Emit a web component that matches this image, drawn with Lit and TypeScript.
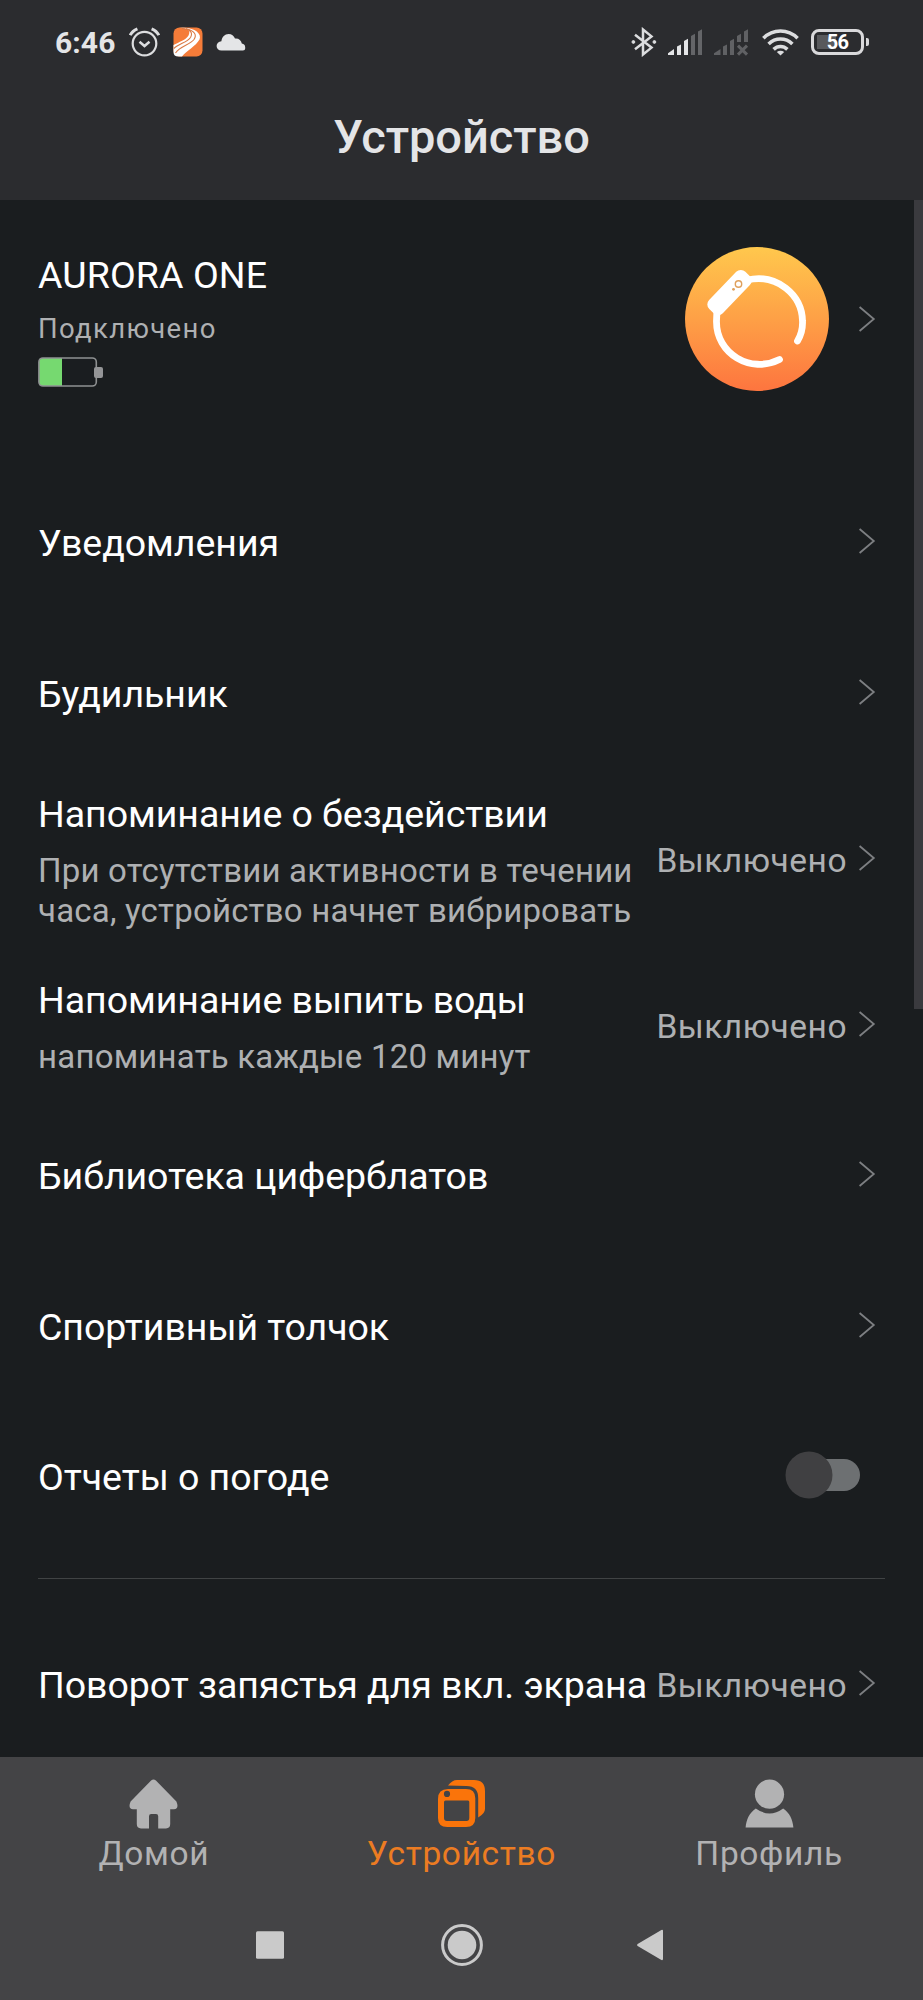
import { LitElement, html, css, svg, nothing } from "lit";
import { customElement, property } from "lit/decorators.js";
import { classMap } from "lit/directives/class-map.js";

@customElement("row-chevron")
class RowChevron extends LitElement {
  static styles = css`
    :host { display: block; width: 18px; height: 28px; flex: none; }
    svg { display: block; }
  `;
  render() {
    return html`<svg width="18" height="28" viewBox="0 0 18 28" fill="none" stroke="#7d7f82" stroke-width="1.8">
      <path d="M1.6 2 L15.8 14 L1.6 26" />
    </svg>`;
  }
}

@customElement("status-bar")
class StatusBar extends LitElement {
  static styles = css`
    :host { display: flex; align-items: center; height: 84px; color: #e4e5e7; box-sizing: border-box; padding: 0 54px 0 55px; }
    svg { display: block; flex: none; }
    .time { font-size: 30px; font-weight: 700; line-height: 36px; letter-spacing: 0.1px; width: 61px; padding-top: 2px; white-space: nowrap; }
    .left { display: flex; align-items: center; gap: 13px; }
    .right { display: flex; align-items: center; margin-left: auto; }
    .bt { margin-right: 11px; }
    .sig { margin-right: 11px; }
    .sig2 { margin-right: 13px; }
    .wifi { margin-right: 12px; }
    .battery { display: flex; align-items: center; }
    .cell { width: 53px; height: 26px; box-sizing: border-box; border: 3.5px solid #d9d9db; border-radius: 8px; padding: 2.5px; display: flex; align-items: center; justify-content: center;
      background: linear-gradient(#58595c, #58595c) 3px 50% / 19px 14px no-repeat; font-size: 20px; font-weight: 700; line-height: 20px; color: #fff; letter-spacing: -0.6px; }
    .nub { width: 3px; height: 8px; margin-left: 2px; background: #d9d9db; border-radius: 0 2px 2px 0; }
  `;
  render() {
    return html`
      <div class="left">
        <div class="time">6:46</div>
        <svg width="31" height="30" viewBox="0 0 31 30" fill="none" stroke="#dcdddf" stroke-width="2.2">
          <circle cx="15.5" cy="16.6" r="11.8" />
          <path d="M10.5 14.8 L15.5 19 L20.5 14.8" stroke-width="2.5" />
          <path d="M1.2 8.2 C2.6 5.2 5 3.2 8.4 1.8 M29.8 8.2 C28.4 5.2 26 3.2 22.6 1.8" stroke-width="3" />
        </svg>
        <svg width="30" height="30" viewBox="0 0 30 30">
          <rect x="0.5" y="0.5" width="29" height="29" rx="6" fill="#f57c39" />
          <path d="M6 0.8 C15 0.8 18 4 15.5 8.5 C13 13 6 15 0.5 18 V25 Q0.5 29.5 5.5 29.5 H9 C13 24 23 19 26.5 12.5 C29 7 22 1 11 0.8Z" fill="#fff" />
          <path d="M9 1.5 C18 2.5 20 6 17.5 10.5 C14 15.5 6 16.5 0.8 21.5 M13 1.5 C22 4 24 8 21 12.5 C17 18 7 19 2.5 26" fill="none" stroke="#d97a45" stroke-width="1.1" />
        </svg>
        <svg width="30" height="18" viewBox="0 0 30 18">
          <path d="M5.5 17.5 C2.5 17.5 0.6 15.6 0.6 13 C0.6 10.4 2.6 8.4 5.4 8.2 C6 4 8.8 1 12.6 1 C15.6 1 18 2.8 19 5.6 C22.8 5.2 25.2 7.4 25.8 10.6 C28 11 29.2 12.4 29.2 14.2 V15.6 Q29.2 17.5 27 17.5Z" fill="#e4e5e7" />
        </svg>
      </div>
      <div class="right">
        <svg class="bt" width="26" height="30" viewBox="0 0 26 30" fill="none" stroke="#dcdddf" stroke-width="2.5">
          <path d="M4 7.8 L20.5 20.6 L12 27.5 V2.5 L20.5 9.4 L4 22.2" />
          <circle cx="2.4" cy="15" r="1.4" fill="#dcdddf" stroke-width="1" />
          <circle cx="23.4" cy="15" r="1.4" fill="#dcdddf" stroke-width="1" />
        </svg>
        <svg class="sig" width="35" height="27" viewBox="0 0 35 27">
          <g fill="#e4e5e7">
            <path d="M0 26 V24.2 L6 20 V26Z" /><path d="M9 26 V17.6 L13 15.4 V26Z" /><path d="M16 26 V12 L20 9.8 V26Z" />
          </g>
          <g fill="#646568"><path d="M23 26 V7 L27 4.8 V26Z" /><path d="M30 26 V2.4 L34 0.2 V26Z" /></g>
        </svg>
        <svg class="sig2" width="35" height="27" viewBox="0 0 35 27" fill="#606164">
          <path d="M0 26 V24.2 L6.5 20 V26Z" /><path d="M9 26 V17.6 L13 15.4 V26Z" /><path d="M16 26 V12 L20 9.8 V26Z" />
          <path d="M23 13 V7 L27 4.8 V13Z" /><path d="M30 13 V2.4 L34 0.2 V13Z" />
          <path d="M24 16.6 L33 25.6 M33 16.6 L24 25.6" stroke="#606164" stroke-width="3" />
        </svg>
        <svg class="wifi" width="37" height="27" viewBox="0 0 37 27" fill="none" stroke="#dcdddf" stroke-width="3.6">
          <path d="M1.4 9.2 C11 -0.4 26 -0.4 35.6 9.2" />
          <path d="M6.6 15 C13.5 8.4 23.5 8.4 30.4 15" />
          <path d="M11.6 20.4 C15.6 16.6 21.4 16.6 25.4 20.4" />
          <path d="M14.8 23 C17 21.2 20 21.2 22.2 23 L18.5 26.6Z" fill="#dcdddf" stroke="none" />
        </svg>
        <div class="battery"><div class="cell">56</div><div class="nub"></div></div>
      </div>
    `;
  }
}

@customElement("device-card")
class DeviceCard extends LitElement {
  static styles = css`
    :host { display: flex; height: 266px; box-sizing: border-box; padding: 47px 47px 0 38px; }
    .info { flex: 1; padding-top: 6px; }
    .name { font-size: 37.5px; line-height: 44px; color: #fff; letter-spacing: 0.1px; }
    .state { font-size: 27.5px; line-height: 34px; color: #aeb0b2; letter-spacing: 1.35px; margin-top: 15px; }
    .charge { display: block; margin-top: 11px; }
    .aside { display: flex; align-items: center; gap: 29px; height: 144px; }
    .disc { display: block; }
  `;
  render() {
    return html`
      <div class="info">
        <div class="name">AURORA ONE</div>
        <div class="state">Подключено</div>
        <svg class="charge" width="66" height="30" viewBox="0 0 66 30">
          <rect x="1" y="1" width="57" height="28" rx="4" fill="#1a1d20" />
          <path d="M1 4 Q1 1 4 1 H24 V29 H4 Q1 29 1 26Z" fill="#76d970" />
          <rect x="0.9" y="1" width="57.4" height="28" rx="4" fill="none" stroke="#8f9192" stroke-width="1.6" />
          <rect x="56" y="10" width="9" height="11" rx="2" fill="#949597" />
        </svg>
      </div>
      <div class="aside">
        <svg class="disc" width="144" height="144" viewBox="0 0 144 144">
          <defs>
            <linearGradient id="warm" x1="0.5" y1="0" x2="0.5" y2="1">
              <stop offset="0" stop-color="#ffc84d" />
              <stop offset="0.5" stop-color="#fea046" />
              <stop offset="1" stop-color="#fd753f" />
            </linearGradient>
          </defs>
          <circle cx="72" cy="72" r="72" fill="url(#warm)" />
          <path d="M62 33 C92 26 117 48 117.5 74 Q118 85 112.5 94 M94.5 112.5 C66 127 31 107 31.5 74 Q31.5 66 33 58" fill="none" stroke="#fff" stroke-width="6.8" stroke-linecap="round" />
          <rect x="-26" y="-9.5" width="52" height="19" rx="6.5" fill="#fff" transform="translate(44.5 45.5) rotate(-46)" />
          <circle cx="53.5" cy="37" r="3.2" fill="none" stroke="#dfa05c" stroke-width="1.4" />
          <circle cx="48.5" cy="42.3" r="1.4" fill="#dfa05c" />
        </svg>
        <row-chevron></row-chevron>
      </div>
    `;
  }
}

@customElement("setting-row")
class SettingRow extends LitElement {
  @property() label = "";
  @property() note = "";
  @property() value = "";
  @property() control = "chevron";

  static styles = css`
    :host { display: flex; align-items: center; box-sizing: border-box; height: 150.4px; padding: 0 47px 0 38px; }
    :host([kind="tall"]) { height: 182px; }
    .text { flex: 1; min-width: 0; white-space: nowrap; }
    .label { font-size: 37.5px; line-height: 44px; color: #fff; letter-spacing: -0.05px; padding-top: 4px; }
    .note { font-size: 33px; line-height: 39.5px; color: #aeb0b2; letter-spacing: 0.2px; margin-top: 15.5px; white-space: pre-line; }
    .noted .label { padding-top: 6.5px; }
    .value { font-size: 33.5px; line-height: 40px; color: #aeb0b2; letter-spacing: 0.5px; padding-top: 6px; margin-right: 11px; }
    .toggle { display: block; margin-right: -1px; }
  `;

  render() {
    return html`
      <div class=${classMap({ text: true, noted: !!this.note })}>
        <div class="label">${this.label}</div>
        ${this.note ? html`<div class="note">${this.note}</div>` : nothing}
      </div>
      ${this.value ? html`<div class="value">${this.value}</div>` : nothing}
      ${this.control === "toggle"
        ? html`<svg class="toggle" width="92" height="48" viewBox="0 0 92 48">
            <rect x="10" y="8" width="65" height="32" rx="16" fill="#6d7072" />
            <circle cx="24" cy="24" r="23.5" fill="#404042" />
          </svg>`
        : html`<row-chevron></row-chevron>`}
    `;
  }
}

const glyphs = {
  home: svg`<path d="M22.1 1.4 Q24.5 -0.6 26.9 1.4 L47.4 22.4 Q50.4 29.6 45 30.2 H41.2 V45 Q41.2 49.4 37 49.4 H29.2 V37.2 Q29.2 35 27 35 H22.2 Q20 35 20 37.2 V49.4 H12 Q7.8 49.4 7.8 45 V30.2 H4 Q-1.4 29.6 1.6 22.4Z" />`,
  device: svg`<path fill-rule="evenodd" d="M11 10 H29 Q38.3 10 38.3 19.3 V39 Q38.3 48 29 48 H10.2 Q1 48 1 39 V20 Q1 10 11 10Z M8.5 21.4 Q7 21.4 7 23 V39 Q7 42 10 42 H29.5 Q32.3 42 32.3 39 V23 Q32.3 21.4 31 21.4Z M10 11.8 A3.1 3.1 0 1 0 10 18 A3.1 3.1 0 1 0 10 11.8Z" />
    <path d="M11 6.6 Q15 1 20 1 H37 Q48 1 48 12 V30 Q48 34.6 41.2 38.4 V19 Q41.2 7 29.5 7Z" />`,
  profile: svg`<circle cx="24.5" cy="15.2" r="14.6" /><path d="M10.8 29.4 Q24.5 39.4 38.2 29.4 C44.6 34 47.6 40 48.4 48.4 H0.6 C1.4 40 4.4 34 10.8 29.4Z" />`,
};

@customElement("tab-bar")
class TabBar extends LitElement {
  static styles = css`
    :host { display: grid; grid-template-columns: repeat(3, 1fr); height: 130px; }
    .tab { display: flex; flex-direction: column; align-items: center; padding-top: 22px; color: #b2b2b3; fill: #b2b2b3; }
    .tab.active { color: #ec7c22; fill: #fa740a; }
    .caption { font-size: 33.5px; line-height: 40px; letter-spacing: 0.65px; margin-top: 5px; }
    svg { display: block; }
  `;
  tabs = [
    { icon: glyphs.home, text: "Домой", active: false },
    { icon: glyphs.device, text: "Устройство", active: true },
    { icon: glyphs.profile, text: "Профиль", active: false },
  ];
  render() {
    return this.tabs.map(
      (t) => html`<div class=${classMap({ tab: true, active: t.active })}>
        <svg width="49" height="50" viewBox="0 0 49 50">${t.icon}</svg>
        <div class="caption">${t.text}</div>
      </div>`
    );
  }
}

@customElement("app-root")
class AppRoot extends LitElement {
  static styles = css`
    :host { display: flex; flex-direction: column; width: 923px; height: 2000px; overflow: hidden; position: relative; background: #1a1d1f; font-family: Roboto, sans-serif; }
    .head { height: 200px; flex: none; background: #2b2c2f; }
    .title { margin: 25px 0 0; text-align: center; font-size: 47px; line-height: 56px; font-weight: 500; color: #e4e5e7; letter-spacing: -0.05px; }
    .list { flex: 1; min-height: 0; overflow: hidden; }
    .divider { height: 1px; margin: 28px 38px; background: #404344; }
    .scroll { position: absolute; right: 0; top: 200px; width: 9px; height: 809px; background: #3a3a3e; }
    .foot { flex: none; height: 243px; background: #444446; }
    .system { display: block; margin-top: 36px; }
  `;
  render() {
    return html`
      <header class="head">
        <status-bar></status-bar>
        <h1 class="title">Устройство</h1>
      </header>
      <main class="list">
        <device-card></device-card>
        <setting-row label="Уведомления"></setting-row>
        <setting-row label="Будильник"></setting-row>
        <setting-row kind="tall" label="Напоминание о бездействии" note=${"При отсутствии активности в течении\nчаса, устройство начнет вибрировать"} value="Выключено"></setting-row>
        <setting-row label="Напоминание выпить воды" note="напоминать каждые 120 минут" value="Выключено"></setting-row>
        <setting-row label="Библиотека циферблатов"></setting-row>
        <setting-row label="Спортивный толчок"></setting-row>
        <setting-row label="Отчеты о погоде" control="toggle"></setting-row>
        <div class="divider"></div>
        <setting-row label="Поворот запястья для вкл. экрана" value="Выключено"></setting-row>
      </main>
      <div class="scroll"></div>
      <footer class="foot">
        <tab-bar></tab-bar>
        <svg class="system" width="923" height="44" viewBox="0 0 923 44" fill="#cacaca">
          <rect x="256" y="8.3" width="28" height="27.4" rx="1.5" />
          <circle cx="462" cy="22" r="14.3" />
          <circle cx="462" cy="22" r="19.4" fill="none" stroke="#cacaca" stroke-width="3" />
          <path d="M637.6 21 L661.4 7 Q663 6.4 663 8 V36 Q663 37.6 661.4 37 L637.6 23 Q636.4 22 637.6 21Z" />
        </svg>
      </footer>
    `;
  }
}
